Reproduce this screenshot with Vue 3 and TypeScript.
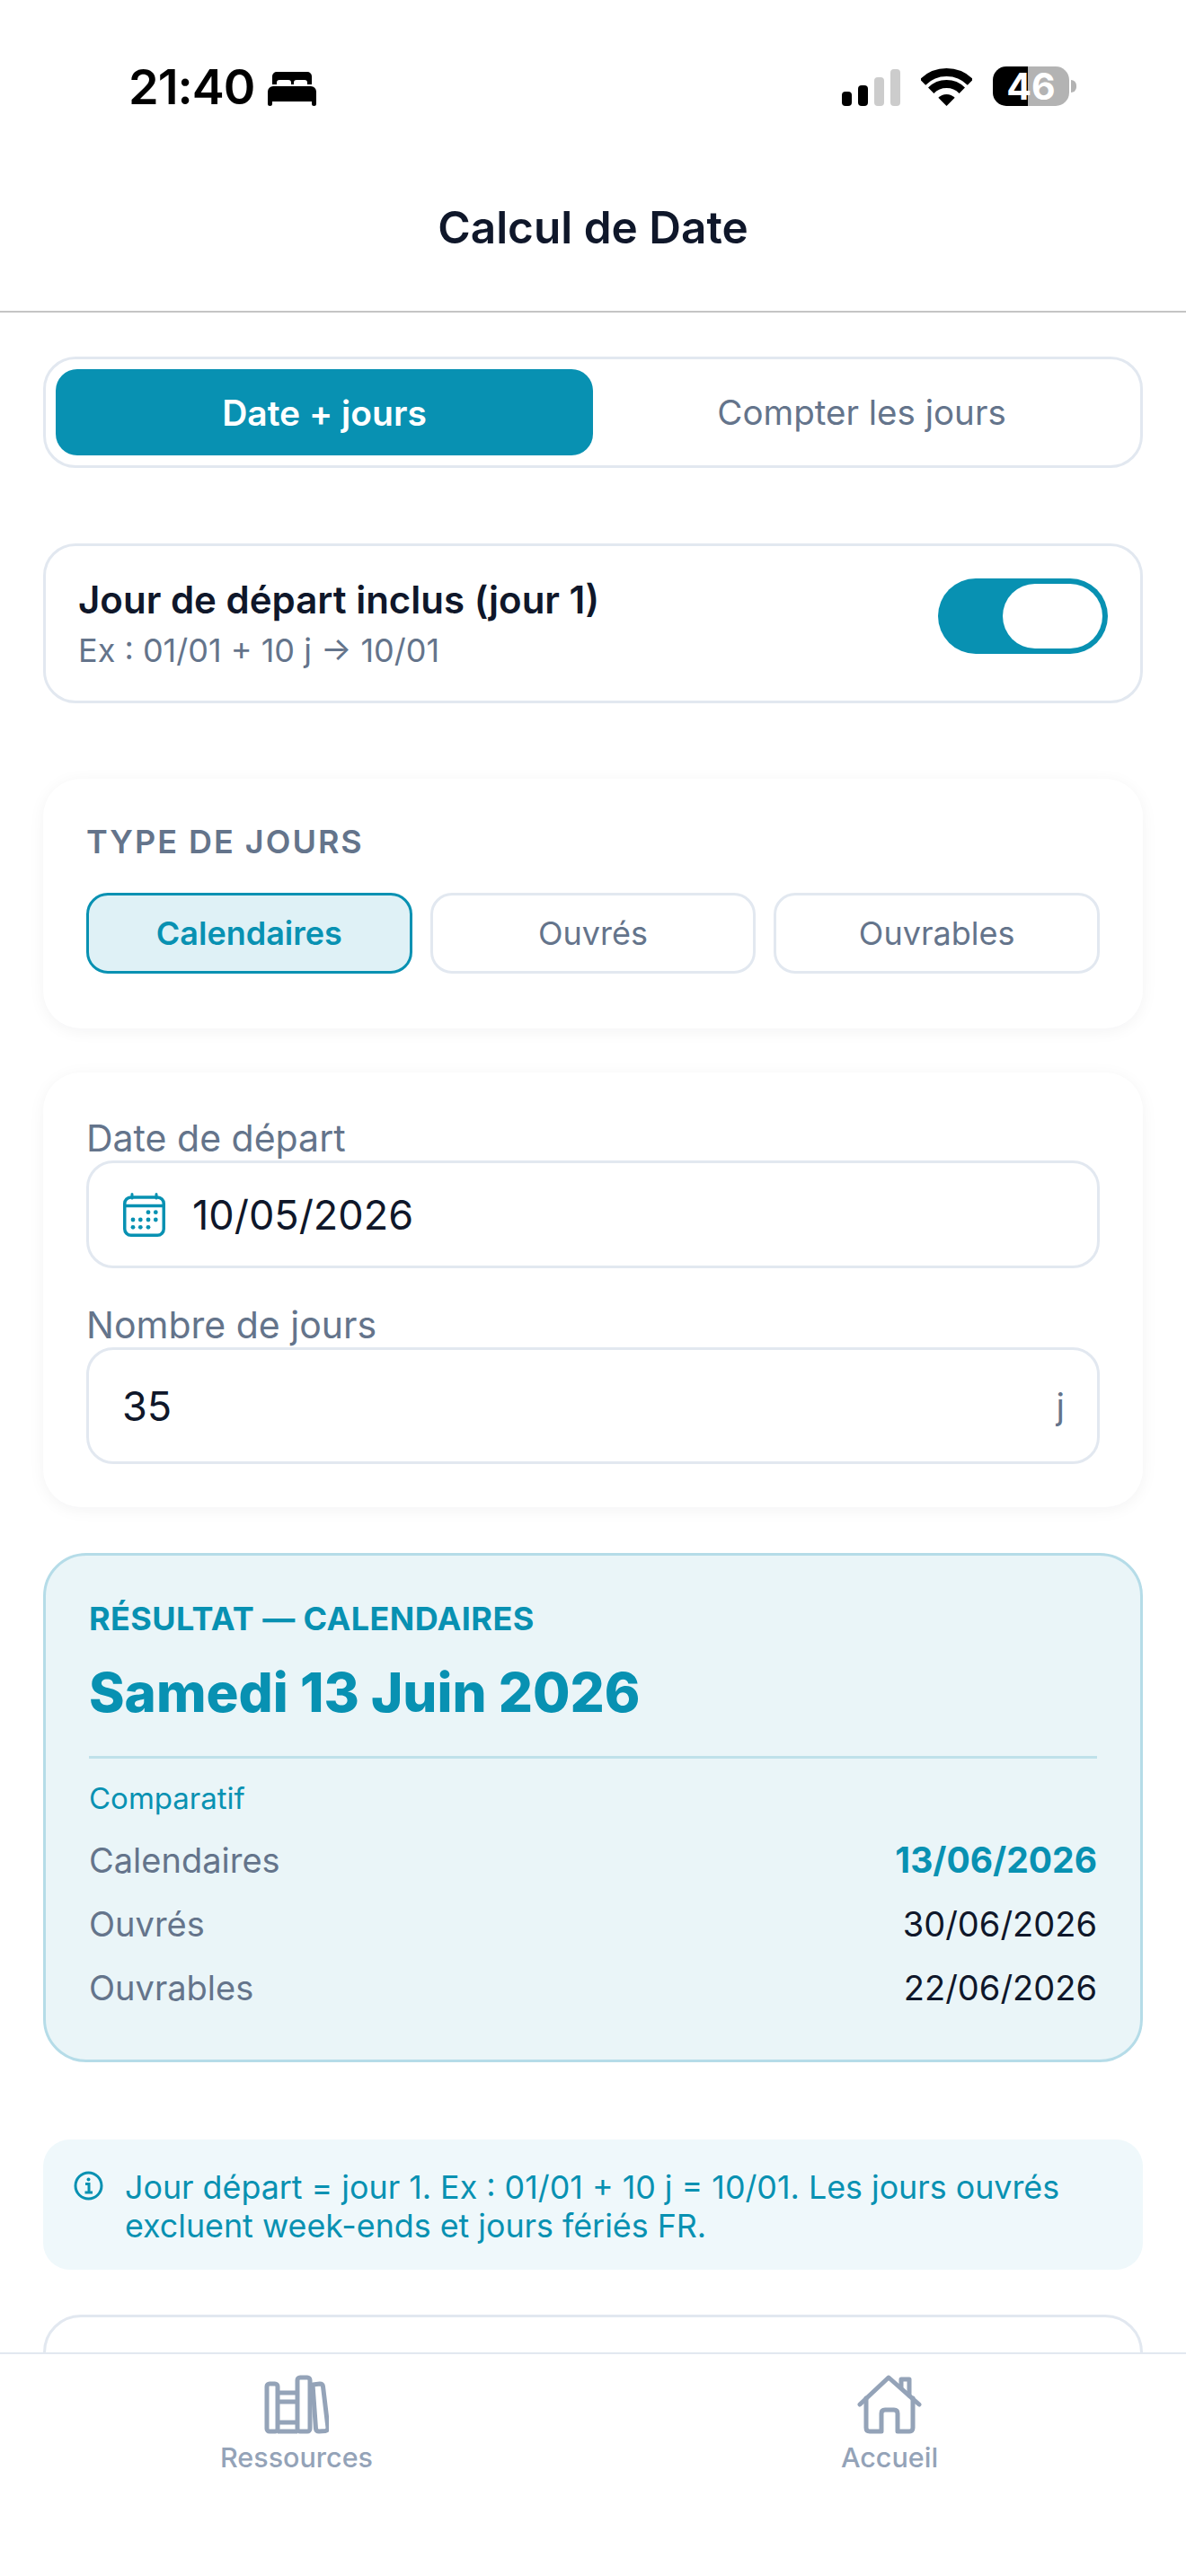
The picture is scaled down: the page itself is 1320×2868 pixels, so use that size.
<script setup lang="ts">
import { ref } from "vue";

const dayTypes = ["Calendaires", "Ouvrés", "Ouvrables"];
const activeType = ref("Calendaires");

const comparison = [
  { label: "Calendaires", date: "13/06/2026", highlight: true },
  { label: "Ouvrés", date: "30/06/2026", highlight: false },
  { label: "Ouvrables", date: "22/06/2026", highlight: false },
];
</script>

<template>
  <div class="screen">
    <header class="top">
      <div class="status">
        <div class="status-left">
          <span class="time">21:40</span>
          <svg class="bed" width="54" height="38" viewBox="0 0 54 38">
            <path fill-rule="evenodd" d="M10 0H44a5 5 0 0 1 5 5V14H44V12a3 3 0 0 0-3-3H32a3 3 0 0 0-3 3V14H26V12a3 3 0 0 0-3-3H13a3 3 0 0 0-3 3V14H5V5a5 5 0 0 1 5-5Z" />
            <path d="M6 16H48a6 6 0 0 1 6 6V35.5a2.5 2.5 0 0 1-5 0V33H5V35.5a2.5 2.5 0 0 1-5 0V22a6 6 0 0 1 6-6Z" />
          </svg>
        </div>
        <div class="status-right">
          <svg class="signal" width="65" height="41" viewBox="0 0 65 41">
            <rect x="0" y="25" width="11" height="16" rx="4" fill="#000" />
            <rect x="18" y="18" width="11" height="23" rx="4" fill="#000" />
            <rect x="36" y="9" width="11" height="32" rx="4" fill="#ccc" />
            <rect x="54" y="0" width="11" height="41" rx="4" fill="#ccc" />
          </svg>
          <svg class="wifi" width="57" height="42" viewBox="0 0 57 42">
            <path d="M2 15.5A37.5 37.5 0 0 1 55 15.5" fill="none" stroke="#000" stroke-width="9" />
            <path d="M11.2 24.7A24.5 24.5 0 0 1 45.8 24.7" fill="none" stroke="#000" stroke-width="9" />
            <path d="M28.5 42L19.3 32.8A13 13 0 0 1 37.7 32.8Z" fill="#000" />
          </svg>
          <div class="battery">
            <span class="battery-body">46</span>
            <span class="battery-nub"></span>
          </div>
        </div>
      </div>
      <h1 class="title">Calcul de Date</h1>
    </header>

    <main class="content">
      <div class="segmented">
        <button class="segment active">Date + jours</button>
        <button class="segment">Compter les jours</button>
      </div>

      <section class="toggle-card">
        <div>
          <div class="toggle-title">Jour de départ inclus (jour 1)</div>
          <div class="toggle-sub">Ex : 01/01 + 10 j → 10/01</div>
        </div>
        <div class="switch"><span class="knob"></span></div>
      </section>

      <section class="card type-card">
        <div class="caps">TYPE DE JOURS</div>
        <div class="type-row">
          <button
            v-for="t in dayTypes"
            :key="t"
            class="type-btn"
            :class="{ active: t === activeType }"
            @click="activeType = t"
          >{{ t }}</button>
        </div>
      </section>

      <section class="card form-card">
        <label class="field-label">Date de départ</label>
        <div class="input date-input">
          <svg class="cal" width="47" height="49" viewBox="0 0 47 49" fill="none" stroke="#0891b2" stroke-width="3.5">
            <rect x="1.75" y="5" width="43.5" height="42.25" rx="7" />
            <path d="M2 14.5H45" />
            <path d="M10 1.5V6M37 1.5V6" stroke-linecap="round" stroke-width="3" />
            <g fill="#0891b2" stroke="none">
              <circle cx="28" cy="21.7" r="2.4" /><circle cx="36.3" cy="21.7" r="2.4" />
              <circle cx="11" cy="30" r="2.4" /><circle cx="19.3" cy="30" r="2.4" /><circle cx="28" cy="30" r="2.4" /><circle cx="36.3" cy="30" r="2.4" />
              <circle cx="11" cy="38.3" r="2.4" /><circle cx="19.3" cy="38.3" r="2.4" /><circle cx="28" cy="38.3" r="2.4" />
            </g>
          </svg>
          <span class="input-value">10/05/2026</span>
        </div>
        <label class="field-label second">Nombre de jours</label>
        <div class="input days-input">
          <span class="input-value">35</span>
          <span class="unit">j</span>
        </div>
      </section>

      <section class="result">
        <div class="result-caps">RÉSULTAT — CALENDAIRES</div>
        <div class="result-date">Samedi 13 Juin 2026</div>
        <div class="result-rule"></div>
        <div class="result-sub">Comparatif</div>
        <div v-for="row in comparison" :key="row.label" class="result-row">
          <span class="row-label">{{ row.label }}</span>
          <span class="row-date" :class="{ strong: row.highlight }">{{ row.date }}</span>
        </div>
      </section>

      <section class="info">
        <svg class="info-icon" width="33" height="33" viewBox="0 0 33 33" fill="none" stroke="#0891b2">
          <circle cx="16.5" cy="16.5" r="14.5" stroke-width="3" />
          <path d="M13 14.5H17V24M12.5 24H21" stroke-width="3" />
          <circle cx="16.5" cy="9.5" r="2" fill="#0891b2" stroke="none" />
        </svg>
        <p>Jour départ = jour 1. Ex : 01/01 + 10 j = 10/01. Les jours ouvrés excluent week-ends et jours fériés FR.</p>
      </section>

      <section class="next-card"></section>
    </main>

    <nav class="tabs">
      <div class="tab">
        <svg width="72" height="66" viewBox="0 0 72 66" fill="none" stroke="#94a3b8" stroke-width="5" stroke-linejoin="round">
          <rect x="3" y="10" width="12" height="53" rx="3" />
          <rect x="37" y="3" width="14" height="60" rx="3" />
          <path d="M15 20H37M15 30H37M15 53H37M15 63H37" />
          <path d="M54 11L62 10Q65 10 65.5 13L71 59Q71 62 68 62.5L61 63Q58 63 57.5 60Z" />
        </svg>
        <span>Ressources</span>
      </div>
      <div class="tab">
        <svg width="72" height="66" viewBox="0 0 72 66" fill="none" stroke="#94a3b8" stroke-width="5" stroke-linecap="round" stroke-linejoin="round">
          <path d="M3 33L35 3L69 33" />
          <path d="M49 14V5H58V23" />
          <path d="M10 26V59Q10 63 14 63H27V43Q27 39 31 39H41Q45 39 45 43V63H58Q62 63 62 59V26" />
        </svg>
        <span>Accueil</span>
      </div>
    </nav>
  </div>
</template>

<style scoped>
.screen {
  width: 1320px;
  height: 2868px;
  display: flex;
  flex-direction: column;
  overflow: hidden;
  background: #fff;
  font-family: Inter, "Liberation Sans", sans-serif;
  color: #0f172a;
}

.top {
  height: 348px;
  flex: none;
  box-sizing: border-box;
  border-bottom: 2px solid #c4c4c4;
}

.status {
  height: 223px;
  box-sizing: border-box;
  padding: 74px 122px 0 143px;
  display: flex;
  justify-content: space-between;
  align-items: flex-start;
}

.status-left {
  display: flex;
  align-items: center;
  gap: 15px;
}

.time {
  font-size: 54px;
  line-height: 46px;
  font-weight: 600;
  letter-spacing: -1px;
  color: #000;
}

.bed {
  margin-top: 3px;
}

.status-right {
  display: flex;
  align-items: flex-end;
  gap: 23px;
  height: 44px;
}

.battery {
  display: flex;
  align-items: center;
  gap: 2px;
}

.battery-body {
  width: 85px;
  height: 44px;
  border-radius: 15px;
  background: linear-gradient(to right, #000 46%, #b3b3b3 46%);
  color: #fff;
  font-size: 41px;
  font-weight: 700;
  line-height: 44px;
  text-align: center;
}

.battery-nub {
  width: 6px;
  height: 14px;
  border-radius: 0 7px 7px 0;
  background: #b3b3b3;
}

.title {
  margin: 0;
  text-align: center;
  font-size: 49.5px;
  line-height: 60px;
  font-weight: 600;
}

.content {
  flex: 1;
  min-height: 0;
  overflow: hidden;
  padding: 49px 48px 0;
  display: flex;
  flex-direction: column;
}

.segmented {
  height: 124px;
  flex: none;
  box-sizing: border-box;
  border: 3px solid #e2e8f0;
  border-radius: 36px;
  padding: 11px;
  display: flex;
}

.segment {
  flex: 1;
  border: 0;
  border-radius: 24px;
  background: transparent;
  font: inherit;
  font-size: 38.5px;
  font-weight: 400;
  color: #64748b;
}

.segment.active {
  background: #0891b2;
  color: #fff;
  font-size: 39px;
  font-weight: 600;
}

.toggle-card {
  height: 178px;
  flex: none;
  box-sizing: border-box;
  margin-top: 84px;
  padding: 0 36px;
  border: 3px solid #e2e8f0;
  border-radius: 36px;
  display: flex;
  align-items: center;
  justify-content: space-between;
}

.toggle-title {
  font-size: 42px;
  line-height: 52px;
  font-weight: 600;
}

.toggle-sub {
  margin-top: 8px;
  font-size: 36px;
  line-height: 44px;
  color: #64748b;
}

.switch {
  width: 189px;
  height: 84px;
  box-sizing: border-box;
  margin-bottom: 16px;
  padding: 6px;
  border-radius: 42px;
  background: #0891b2;
  display: flex;
  justify-content: flex-end;
}

.knob {
  width: 111px;
  height: 72px;
  border-radius: 36px;
  background: #fff;
}

.card {
  flex: none;
  box-sizing: border-box;
  border-radius: 42px;
  background: #fff;
  padding: 0 48px;
  box-shadow: 0 3px 18px rgba(15, 23, 42, 0.05);
}

.type-card {
  height: 278px;
  margin-top: 84px;
  padding-top: 48px;
}

.caps {
  font-size: 36px;
  line-height: 44px;
  font-weight: 600;
  letter-spacing: 2px;
  color: #64748b;
}

.type-row {
  margin-top: 35px;
  display: grid;
  grid-template-columns: repeat(3, 1fr);
  gap: 20px;
}

.type-btn {
  height: 90px;
  box-sizing: border-box;
  border: 3px solid #e2e8f0;
  border-radius: 24px;
  background: #fff;
  font: inherit;
  font-size: 36px;
  font-weight: 400;
  color: #64748b;
}

.type-btn.active {
  border-color: #0891b2;
  background: #dff1f6;
  color: #0891b2;
  font-weight: 600;
}

.form-card {
  height: 484px;
  margin-top: 49px;
  padding-top: 48px;
}

.field-label {
  display: block;
  font-size: 41px;
  line-height: 50px;
  color: #64748b;
}

.field-label.second {
  margin-top: 38px;
}

.input {
  box-sizing: border-box;
  border: 3px solid #e2e8f0;
  border-radius: 30px;
  display: flex;
  align-items: center;
}

.date-input {
  height: 120px;
  padding: 0 36px 0 38px;
  gap: 30px;
}

.days-input {
  height: 130px;
  padding: 0 36px 0 37px;
  justify-content: space-between;
}

.input-value {
  font-size: 45px;
  font-weight: 400;
}

.unit {
  font-size: 39px;
  color: #64748b;
}

.result {
  flex: none;
  height: 567px;
  box-sizing: border-box;
  margin-top: 51px;
  padding: 48px 48px 0;
  background: #eaf5f8;
  border: 3px solid #b5dce8;
  border-radius: 48px;
}

.result-caps {
  font-size: 36px;
  line-height: 44px;
  font-weight: 700;
  letter-spacing: 0.4px;
  color: #0891b2;
}

.result-date {
  margin-top: 24px;
  font-size: 60px;
  line-height: 72px;
  font-weight: 800;
  color: #0891b2;
}

.result-rule {
  margin-top: 35px;
  height: 3px;
  background: #bfe1ea;
}

.result-sub {
  margin-top: 24px;
  font-size: 33px;
  line-height: 40px;
  color: #0891b2;
}

.result-row {
  height: 71px;
  display: flex;
  align-items: center;
  justify-content: space-between;
  font-size: 38px;
}

.result-sub + .result-row {
  margin-top: 13px;
}

.row-label {
  color: #64748b;
}

.row-date.strong {
  font-size: 39px;
  font-weight: 700;
  color: #0891b2;
}

.info {
  flex: none;
  height: 145px;
  box-sizing: border-box;
  margin-top: 86px;
  padding: 32px 48px 0 34px;
  border-radius: 30px;
  background: #eff8fb;
  display: flex;
  align-items: flex-start;
  gap: 24px;
  color: #0891b2;
}

.info-icon {
  flex: none;
  margin-top: 3px;
}

.info p {
  margin: 0;
  font-size: 35.8px;
  line-height: 43px;
}

.next-card {
  flex: none;
  height: 200px;
  margin-top: 50px;
  box-sizing: border-box;
  border: 3px solid #e2e8f0;
  border-radius: 42px;
}

.tabs {
  height: 249px;
  flex: none;
  box-sizing: border-box;
  border-top: 2px solid #e2e8f0;
  background: #fff;
  display: grid;
  grid-template-columns: 1fr 1fr;
}

.tab {
  padding-top: 23px;
  display: flex;
  flex-direction: column;
  align-items: center;
  gap: 8px;
  font-size: 30.5px;
  line-height: 36px;
  font-weight: 500;
  color: #94a3b8;
}
</style>
